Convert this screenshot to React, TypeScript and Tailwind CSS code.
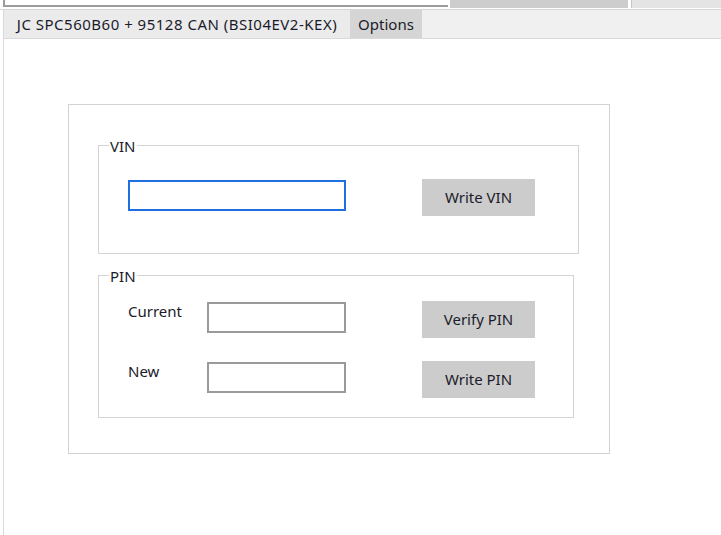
import React from "react";

const font = { fontFamily: '"Noto Sans", "Open Sans", Arial, sans-serif' };

function GroupLabel({ text }: { text: string }) {
  return (
    <span className="absolute -top-[10px] left-[10px] bg-white px-[1px] text-[15px] leading-[20px] text-[#1b1b2b]">
      {text}
    </span>
  );
}

function GrayButton({ label }: { label: string }) {
  return (
    <button className="h-[37px] w-[113px] bg-[#cccccc] text-[15px] text-[#1b1b2b]">
      {label}
    </button>
  );
}

export default function App() {
  return (
    <div className="flex h-[535px] w-[721px] flex-col overflow-hidden bg-white" style={font}>
      {/* bits of the toolbar above, cut off by the screenshot */}
      <div className="flex h-[10px] border-b border-[#d6d6d6]">
        <div className="w-[3px] bg-white" />
        <div className="h-[7px] w-[445px] border-b-2 border-l-2 border-[#9c9c9c] bg-white" />
        <div className="w-[2px] bg-white" />
        <div className="h-[8px] w-[178px] bg-[#cdcdcd]" />
        <div className="w-[3px] bg-white" />
        <div className="h-[8px] flex-1 border-l border-[#c4c4c4] bg-[#e4e4e4]" />
      </div>

      <div className="ml-[3px] flex flex-1 flex-col border-l border-[#d9d9d9]">
        {/* tabs */}
        <div className="flex h-[29px] border-b border-[#dadada] bg-[#f0f0f0] text-[15px] text-[#1b1b2b]">
          <div className="flex w-[346px] items-center justify-center bg-[#ebebeb] tracking-[0.5px]">
            JC SPC560B60 + 95128 CAN (BSI04EV2-KEX)
          </div>
          <div className="flex w-[72px] items-center justify-center bg-[#d5d5d5]">Options</div>
        </div>

        {/* content */}
        <div className="flex-1 pl-[64px] pt-[65px]">
          <div className="h-[350px] w-[542px] border border-[#d2d2d2] pl-[29px] pt-[40px]">
            {/* VIN */}
            <div className="relative flex h-[109px] w-[481px] items-start border border-[#d4d4d4] pl-[29px]">
              <GroupLabel text="VIN" />
              <input className="mt-[34px] h-[31px] w-[218px] border-2 border-[#1f6fe0] bg-white outline-none" />
              <div className="ml-[76px] mt-[33px]">
                <GrayButton label="Write VIN" />
              </div>
            </div>

            {/* PIN */}
            <div className="relative mt-[21px] flex h-[143px] w-[476px] flex-col border border-[#d4d4d4] pl-[29px] pt-[25px]">
              <GroupLabel text="PIN" />
              <div className="flex items-start">
                <span className="w-[79px] text-[15px] leading-[20px] text-[#1b1b2b]">Current</span>
                <input className="mt-[1px] h-[31px] w-[139px] border-2 border-[#9a9a9a] bg-white outline-none" />
                <div className="ml-[76px]">
                  <GrayButton label="Verify PIN" />
                </div>
              </div>
              <div className="mt-[23px] flex items-start">
                <span className="w-[79px] text-[15px] leading-[20px] text-[#1b1b2b]">New</span>
                <input className="mt-[1px] h-[31px] w-[139px] border-2 border-[#9a9a9a] bg-white outline-none" />
                <div className="ml-[76px]">
                  <GrayButton label="Write PIN" />
                </div>
              </div>
            </div>
          </div>
        </div>
      </div>
    </div>
  );
}
